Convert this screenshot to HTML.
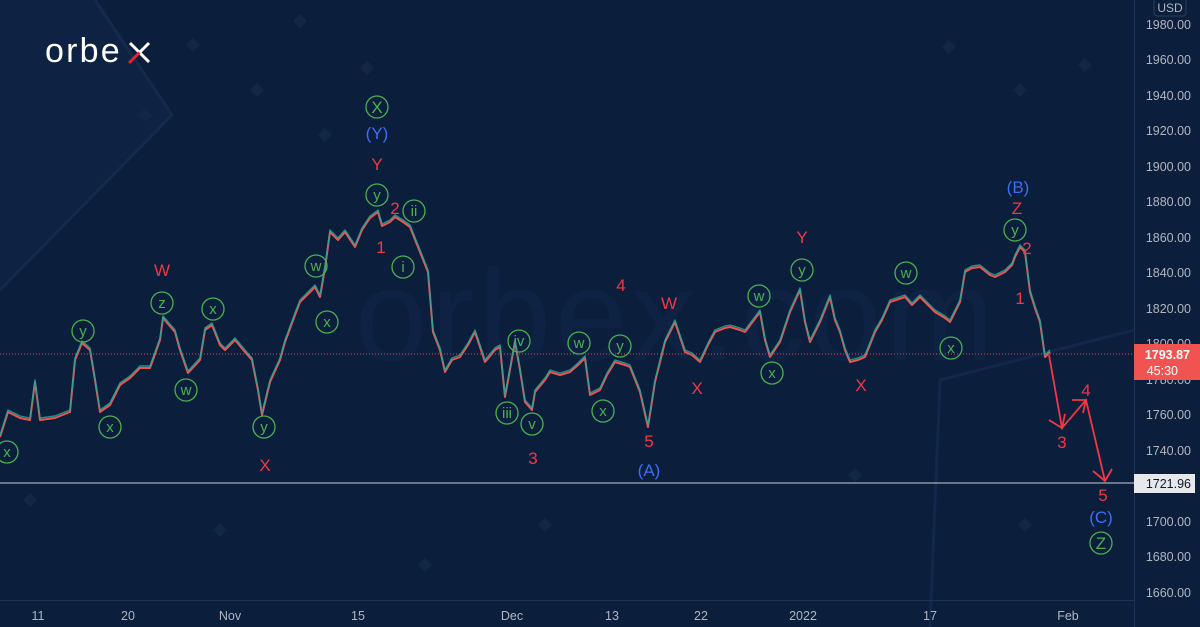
<!DOCTYPE html><html><head><meta charset="utf-8"><style>
body{margin:0;background:#0b1f3d;}
svg{display:block;font-family:"Liberation Sans","DejaVu Sans",sans-serif;}
</style></head><body>
<svg width="1200" height="627" viewBox="0 0 1200 627" xmlns="http://www.w3.org/2000/svg">
<rect width="1200" height="627" fill="#0b1f3d"/>
<polygon points="0,0 95,0 172,115 0,290" fill="#0e2343"/>
<polyline points="95,0 172,115 0,290" fill="none" stroke="#132a4c" stroke-width="3"/>
<polyline points="930,627 940,380 1134,330" fill="none" stroke="#11284a" stroke-width="3"/>
<g fill="#102746">
<rect x="295" y="16" width="10" height="10" transform="rotate(45 300 21)"/>
<rect x="188" y="40" width="10" height="10" transform="rotate(45 193 45)"/>
<rect x="252" y="85" width="10" height="10" transform="rotate(45 257 90)"/>
<rect x="362" y="63" width="10" height="10" transform="rotate(45 367 68)"/>
<rect x="944" y="42" width="10" height="10" transform="rotate(45 949 47)"/>
<rect x="1015" y="85" width="10" height="10" transform="rotate(45 1020 90)"/>
<rect x="1080" y="60" width="10" height="10" transform="rotate(45 1085 65)"/>
<rect x="140" y="110" width="10" height="10" transform="rotate(45 145 115)"/>
<rect x="320" y="130" width="10" height="10" transform="rotate(45 325 135)"/>
<rect x="25" y="495" width="10" height="10" transform="rotate(45 30 500)"/>
<rect x="215" y="525" width="10" height="10" transform="rotate(45 220 530)"/>
<rect x="420" y="560" width="10" height="10" transform="rotate(45 425 565)"/>
<rect x="540" y="520" width="10" height="10" transform="rotate(45 545 525)"/>
<rect x="850" y="470" width="10" height="10" transform="rotate(45 855 475)"/>
<rect x="1020" y="520" width="10" height="10" transform="rotate(45 1025 525)"/>
</g>
<text x="355" y="360" font-size="130" fill="#0e2343" letter-spacing="4">orbex.com</text>
<!-- logo -->
<text x="45" y="62" font-size="34" fill="#ffffff" letter-spacing="2.2">orbe</text>
<g stroke-width="3" stroke-linecap="butt">
<line x1="130" y1="43" x2="149" y2="62" stroke="#ffffff"/>
<line x1="149" y1="43" x2="139.5" y2="52.5" stroke="#ffffff"/>
<line x1="139.5" y1="52.5" x2="129" y2="63" stroke="#e5222f"/>
</g>
<line x1="0" y1="483" x2="1134" y2="483" stroke="#c8ccd6" stroke-width="1"/>
<line x1="0" y1="354" x2="1134" y2="354" stroke="#e0444e" stroke-width="1" stroke-dasharray="1,2"/>
<g fill="none" stroke-linejoin="round">
<polyline stroke="#ef5350" stroke-width="2" points="0,437 8,412 20,418 30,420 35,382 40,420 55,418 70,412 75,360 82,343 90,350 95,380 100,412 110,405 120,385 130,378 140,368 150,368 160,340 163,318 175,332 180,350 188,373 200,360 205,330 212,325 220,345 225,350 235,340 245,352 252,360 258,390 262,415 270,382 280,360 285,342 295,315 300,302 315,287 320,297 325,268 330,232 338,240 345,232 355,247 362,230 370,218 378,212 382,226 390,222 395,217 403,222 410,227 420,252 428,272 433,332 440,350 445,372 452,360 460,357 468,345 475,332 485,362 495,350 500,347 505,397 515,342 520,370 525,402 532,410 535,392 545,380 550,372 560,375 570,372 578,365 585,358 590,395 600,390 607,375 615,362 625,365 630,367 640,392 648,427 655,382 665,342 675,322 685,352 692,355 700,362 708,345 715,332 725,328 730,327 740,330 745,332 760,312 765,340 770,357 780,342 790,312 800,290 805,322 810,342 820,322 830,297 835,320 840,332 845,350 850,362 858,360 865,357 875,332 882,320 890,302 905,297 912,305 920,297 928,305 935,312 945,318 950,322 960,302 965,272 972,268 980,267 990,275 995,277 1005,272 1012,265 1015,257 1020,247 1025,252 1030,292 1035,308 1040,322 1045,357 1050,352"/>
<polyline stroke="#26a69a" stroke-width="1.4" opacity="0.85" points="0,435 8,410 20,416 30,418 35,380 40,418 55,416 70,410 75,358 82,341 90,348 95,378 100,410 110,403 120,383 130,376 140,366 150,366 160,338 163,316 175,330 180,348 188,371 200,358 205,328 212,323 220,343 225,348 235,338 245,350 252,358 258,388 262,413 270,380 280,358 285,340 295,313 300,300 315,285 320,295 325,266 330,230 338,238 345,230 355,245 362,228 370,216 378,210 382,224 390,220 395,215 403,220 410,225 420,250 428,270 433,330 440,348 445,370 452,358 460,355 468,343 475,330 485,360 495,348 500,345 505,395 515,340 520,368 525,400 532,408 535,390 545,378 550,370 560,373 570,370 578,363 585,356 590,393 600,388 607,373 615,360 625,363 630,365 640,390 648,425 655,380 665,340 675,320 685,350 692,353 700,360 708,343 715,330 725,326 730,325 740,328 745,330 760,310 765,338 770,355 780,340 790,310 800,288 805,320 810,340 820,320 830,295 835,318 840,330 845,348 850,360 858,358 865,355 875,330 882,318 890,300 905,295 912,303 920,295 928,303 935,310 945,316 950,320 960,300 965,270 972,266 980,265 990,273 995,275 1005,270 1012,263 1015,255 1020,245 1025,250 1030,290 1035,306 1040,320 1045,355 1050,350"/>
</g>
<g fill="none" stroke="#f23645" stroke-width="1.8">
<polyline points="1049,355 1062,428 1086,400 1105,481"/>
<polyline points="1049,420 1062,428 1065,414"/>
<polyline points="1072,400 1086,400 1083,413"/>
<polyline points="1093,471 1105,481 1112,469"/>
</g>
<g fill="none" stroke="#4caf50" stroke-width="1.3">
<circle cx="7" cy="452" r="11"/><circle cx="83" cy="331" r="11"/><circle cx="110" cy="427" r="11"/>
<circle cx="162" cy="303" r="11"/><circle cx="186" cy="390" r="11"/><circle cx="213" cy="309" r="11"/>
<circle cx="264" cy="427" r="11"/><circle cx="316" cy="266" r="11"/><circle cx="327" cy="322" r="11"/>
<circle cx="377" cy="107" r="11"/><circle cx="377" cy="195" r="11"/><circle cx="414" cy="211" r="11"/>
<circle cx="403" cy="267" r="11"/><circle cx="519" cy="341" r="11"/><circle cx="507" cy="413" r="11"/>
<circle cx="532" cy="424" r="11"/><circle cx="579" cy="343" r="11"/><circle cx="603" cy="411" r="11"/>
<circle cx="620" cy="346" r="11"/><circle cx="759" cy="296" r="11"/><circle cx="772" cy="373" r="11"/>
<circle cx="802" cy="270" r="11"/><circle cx="906" cy="273" r="11"/><circle cx="951" cy="348" r="11"/>
<circle cx="1015" cy="230" r="11"/><circle cx="1101" cy="543" r="11"/>
</g>
<g fill="#4caf50" font-size="15" text-anchor="middle">
<text x="7" y="457">x</text><text x="83" y="336">y</text><text x="110" y="432">x</text>
<text x="162" y="308">z</text><text x="186" y="395">w</text><text x="213" y="314">x</text>
<text x="264" y="432">y</text><text x="316" y="271">w</text><text x="327" y="327">x</text>
<text x="377" y="113" font-size="17">X</text><text x="377" y="200">y</text><text x="414" y="216">ii</text>
<text x="403" y="272">i</text><text x="519" y="346">iv</text><text x="507" y="418">iii</text>
<text x="532" y="429">v</text><text x="579" y="348">w</text><text x="603" y="416">x</text>
<text x="620" y="351">y</text><text x="759" y="301">w</text><text x="772" y="378">x</text>
<text x="802" y="275">y</text><text x="906" y="278">w</text><text x="951" y="353">x</text>
<text x="1015" y="235">y</text><text x="1101" y="549" font-size="17">Z</text>
</g>
<g fill="#f23645" font-size="17" text-anchor="middle">
<text x="162" y="276">W</text><text x="265" y="471">X</text><text x="377" y="170">Y</text>
<text x="395" y="214">2</text><text x="381" y="253">1</text><text x="621" y="291">4</text>
<text x="533" y="464">3</text><text x="649" y="447">5</text><text x="669" y="309">W</text>
<text x="697" y="394">X</text><text x="802" y="243">Y</text><text x="861" y="391">X</text>
<text x="1017" y="214">Z</text><text x="1027" y="254">2</text><text x="1020" y="304">1</text>
<text x="1086" y="396">4</text><text x="1062" y="448">3</text><text x="1103" y="501">5</text>
</g>
<g fill="#3d6df2" font-size="17" text-anchor="middle">
<text x="377" y="139">(Y)</text><text x="649" y="476">(A)</text><text x="1018" y="193">(B)</text><text x="1101" y="523">(C)</text>
</g>
<line x1="1134.5" y1="0" x2="1134.5" y2="627" stroke="#1d3356"/>
<line x1="0" y1="600.5" x2="1134" y2="600.5" stroke="#1d3356"/>
<rect x="1154" y="-4" width="32" height="20" rx="3" fill="none" stroke="#2a3f60"/>
<text x="1170" y="12" fill="#b2b5be" font-size="12" text-anchor="middle">USD</text>
<g fill="#b2b5be" font-size="12.5" text-anchor="end">
<text x="1191" y="29">1980.00</text><text x="1191" y="64">1960.00</text><text x="1191" y="100">1940.00</text>
<text x="1191" y="135">1920.00</text><text x="1191" y="171">1900.00</text><text x="1191" y="206">1880.00</text>
<text x="1191" y="242">1860.00</text><text x="1191" y="277">1840.00</text><text x="1191" y="313">1820.00</text>
<text x="1191" y="348">1800.00</text><text x="1191" y="384">1780.00</text><text x="1191" y="419">1760.00</text>
<text x="1191" y="455">1740.00</text><text x="1191" y="526">1700.00</text>
<text x="1191" y="561">1680.00</text><text x="1191" y="597">1660.00</text>
</g>
<rect x="1134" y="344" width="66" height="36" fill="#f05350"/>
<text x="1190" y="359" fill="#fff" font-size="12.5" text-anchor="end" font-weight="bold">1793.87</text>
<text x="1178" y="375" fill="#fff" font-size="12.5" text-anchor="end">45:30</text>
<rect x="1134" y="474" width="61" height="19" fill="#e6e8ee"/>
<text x="1191" y="488" fill="#131722" font-size="12.5" text-anchor="end">1721.96</text>
<g fill="#b2b5be" font-size="12.5" text-anchor="middle">
<text x="38" y="620">11</text><text x="128" y="620">20</text><text x="230" y="620">Nov</text>
<text x="358" y="620">15</text><text x="512" y="620">Dec</text><text x="612" y="620">13</text>
<text x="701" y="620">22</text><text x="803" y="620">2022</text><text x="930" y="620">17</text><text x="1068" y="620">Feb</text>
</g>
</svg>
</body></html>
